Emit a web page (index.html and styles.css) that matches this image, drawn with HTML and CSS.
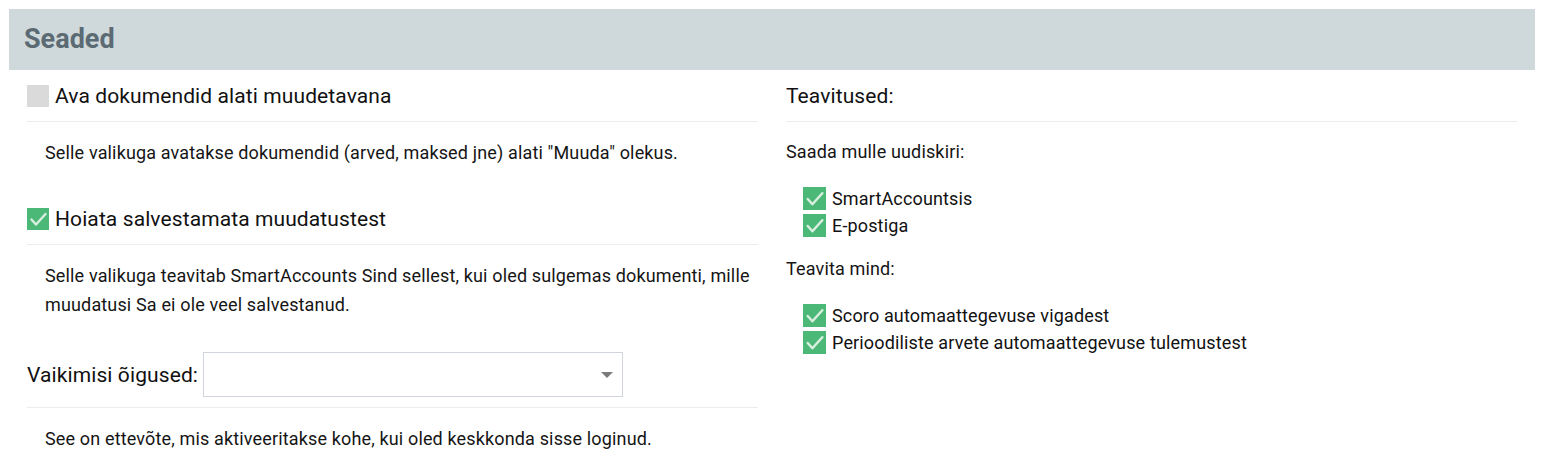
FILE: index.html
```html
<!DOCTYPE html>
<html lang="et">
<head>
<meta charset="utf-8">
<title>Seaded</title>
<link rel="stylesheet" href="styles.css">
</head>
<body>
<div class="page">
  <div class="header"><h1>Seaded</h1></div>
  <div class="content">
    <div class="col">
      <div class="opt-head">
        <span class="cb"></span>
        <span class="opt-label">Ava dokumendid alati muudetavana</span>
      </div>
      <div class="desc">Selle valikuga avatakse dokumendid (arved, maksed jne) alati "Muuda" olekus.</div>

      <div class="opt-head">
        <span class="cb on"><svg viewBox="0 0 22 22"><polyline points="4.5,11.5 9,16.5 18.5,6"/></svg></span>
        <span class="opt-label">Hoiata salvestamata muudatustest</span>
      </div>
      <div class="desc">Selle valikuga teavitab SmartAccounts Sind sellest, kui oled sulgemas dokumenti, mille muudatusi Sa ei ole veel salvestanud.</div>

      <div class="select-row">
        <span class="opt-label">Vaikimisi õigused:</span>
        <div class="select"><span class="arrow"></span></div>
      </div>
      <div class="desc">See on ettevõte, mis aktiveeritakse kohe, kui oled keskkonda sisse loginud.</div>
    </div>

    <div class="col">
      <div class="opt-head">
        <span class="opt-label">Teavitused:</span>
      </div>
      <p class="sub first">Saada mulle uudiskiri:</p>
      <ul class="checks">
        <li><span class="cb on"><svg viewBox="0 0 22 22"><polyline points="4.5,11.5 9,16.5 18.5,6"/></svg></span>SmartAccountsis</li>
        <li><span class="cb on"><svg viewBox="0 0 22 22"><polyline points="4.5,11.5 9,16.5 18.5,6"/></svg></span>E-postiga</li>
      </ul>
      <p class="sub">Teavita mind:</p>
      <ul class="checks">
        <li><span class="cb on"><svg viewBox="0 0 22 22"><polyline points="4.5,11.5 9,16.5 18.5,6"/></svg></span>Scoro automaattegevuse vigadest</li>
        <li><span class="cb on"><svg viewBox="0 0 22 22"><polyline points="4.5,11.5 9,16.5 18.5,6"/></svg></span>Perioodiliste arvete automaattegevuse tulemustest</li>
      </ul>
    </div>
  </div>
</div>
</body>
</html>
```

FILE: styles.css
```css
* { box-sizing: border-box; }
html, body { margin: 0; padding: 0; background: #fff; }
body {
  font-family: Roboto, "Liberation Sans", Arial, sans-serif;
  color: #111;
}
.page {
  width: 1526px;
  margin: 9px 0 0 9px;
}
.header {
  height: 61px;
  background: #cfd9db;
  display: flex;
  align-items: center;
  padding-left: 15px;
}
.header h1 {
  margin: 0;
  font-size: 27px;
  font-weight: 700;
  color: #5b6a73;
  line-height: 1;
}
.content {
  display: grid;
  grid-template-columns: 1fr 1fr;
  column-gap: 28px;
  padding: 0 18px;
}
.opt-head {
  height: 52px;
  display: flex;
  align-items: center;
  border-bottom: 1px solid #ececec;
  padding-top: 1px;
}
.opt-label {
  font-size: 21px;
  letter-spacing: 0.1px;
  color: #111;
}
.cb {
  width: 22px;
  height: 22px;
  background: #dadada;
  display: inline-flex;
  flex: none;
  margin-right: 6px;
}
.cb.on { background: #4cb877; }
.cb svg { width: 22px; height: 22px; display: block; }
.cb svg polyline {
  fill: none;
  stroke: #d8efe0;
  stroke-width: 2.4;
  stroke-linecap: round;
  stroke-linejoin: round;
}
.desc {
  font-size: 18px;
  letter-spacing: 0.15px;
  line-height: 28.8px;
  padding: 17px 0 25px 18px;
  color: #151515;
}
.select-row {
  display: flex;
  align-items: center;
  padding: 8px 0 10px;
  border-bottom: 1px solid #ececec;
}
.select-row .opt-label { margin-right: 5px; }
.select {
  width: 420px;
  height: 45px;
  border: 1px solid #cfd5db;
  background: #fff;
  position: relative;
}
.select .arrow {
  position: absolute;
  right: 9px;
  top: 19px;
  width: 0;
  height: 0;
  border-left: 6px solid transparent;
  border-right: 6px solid transparent;
  border-top: 6px solid #7a7a7a;
}
.sub {
  font-size: 18px;
  letter-spacing: 0.15px;
  line-height: 28.8px;
  margin: 16px 0 0;
  color: #151515;
}
.sub.first { margin-top: 16px; }
.checks {
  list-style: none;
  margin: 18px 0 0;
  padding: 0 0 0 17px;
}
.checks li {
  height: 27px;
  display: flex;
  align-items: center;
  font-size: 18px;
  letter-spacing: 0.15px;
  color: #111;
}
.checks .cb {
  width: 23px;
  height: 23px;
  margin-right: 6px;
}
.checks .cb svg { width: 23px; height: 23px; }
```
